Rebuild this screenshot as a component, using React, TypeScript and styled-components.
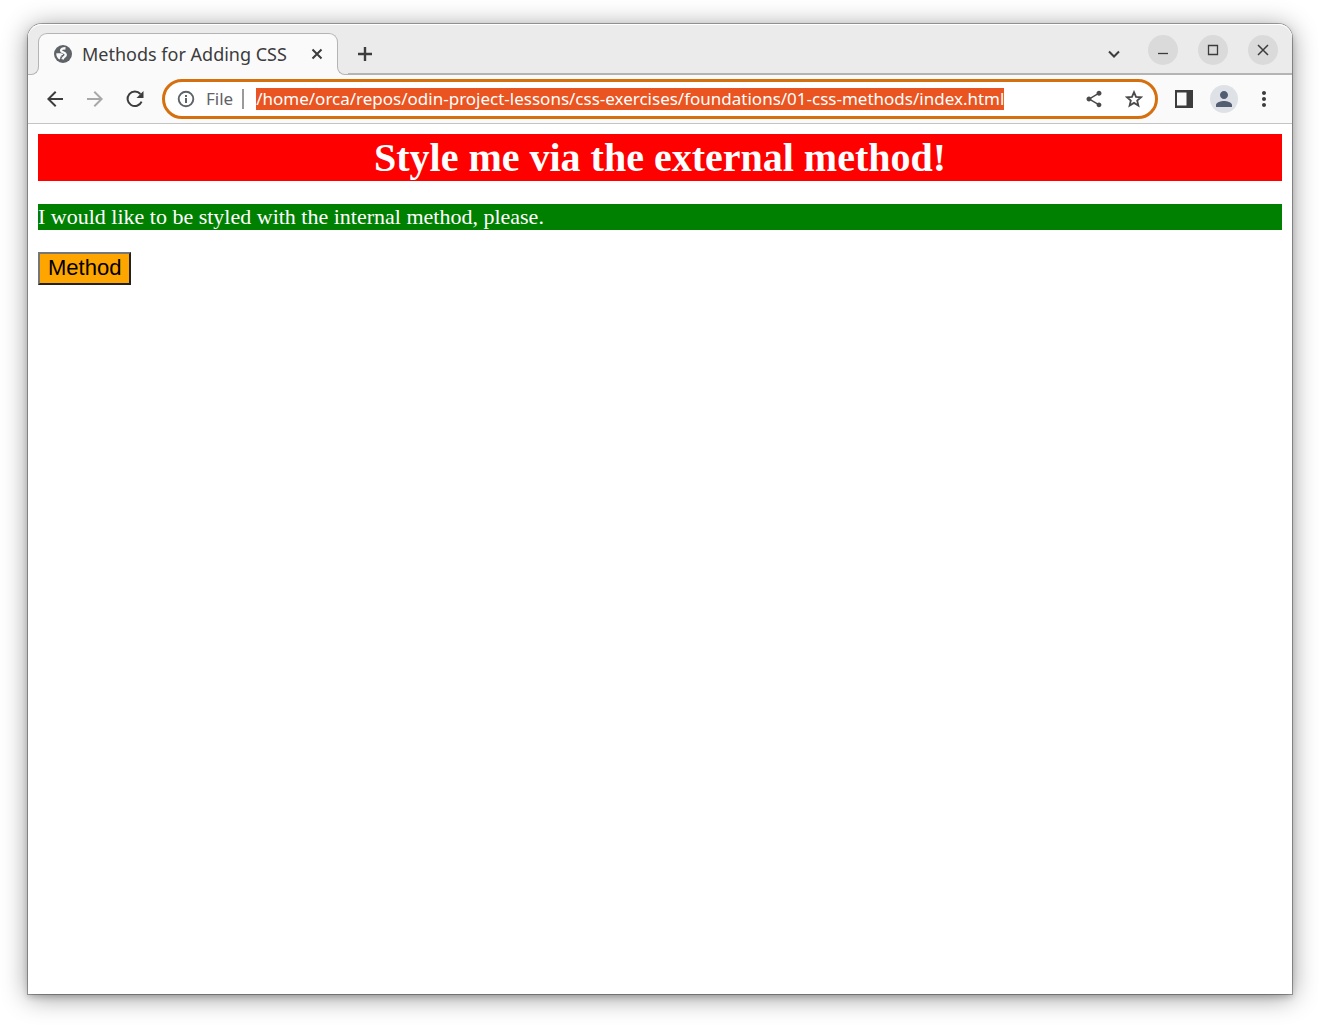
import React, { useEffect, useRef } from "react";
import styled, { createGlobalStyle } from "styled-components";
import {
  MdArrowBack,
  MdArrowForward,
  MdMoreVert,
  MdPerson,
  MdShare,
} from "react-icons/md";

const frame = {
  strip: "#ebebeb",
  bar: "#fafafa",
  line: "#b4b4b4",
  ink: "#3c3c3c",
  focus: "#d6700f",
  select: "#e95420",
};

const GlobalStyle = createGlobalStyle`
  *, *::before, *::after { box-sizing: border-box; }
  html { background: #fff; }
  body { margin: 0; }
`;

const Desktop = styled.div`
  display: flex;
  min-height: 100vh;
  padding: 24px 26px 31px 28px;
`;

const Window = styled.div`
  flex: 1;
  min-width: 0;
  display: flex;
  flex-direction: column;
  background: #fff;
  border-radius: 14px 14px 0 0;
  box-shadow: 0 0 0 1px rgba(0, 0, 0, 0.3), 0 3px 6px rgba(0, 0, 0, 0.2),
    0 3px 26px rgba(0, 0, 0, 0.42);
`;

const TabStrip = styled.header`
  display: flex;
  align-items: flex-end;
  height: 51px;
  padding: 0 14px 0 10px;
  background: ${frame.strip};
  border-bottom: 2px solid ${frame.line};
  border-radius: 14px 14px 0 0;
  box-shadow: inset 0 1px 0 #fff;
  color: ${frame.ink};
  font-family: "Noto Sans", sans-serif;
`;

const Tab = styled.div`
  position: relative;
  display: flex;
  align-items: center;
  width: 300px;
  height: 42px;
  margin-bottom: -2px;
  padding: 0 10px 2px 15px;
  background: ${frame.bar};
  border: 1px solid ${frame.line};
  border-bottom: 0;
  border-radius: 9px 9px 0 0;

  &::before,
  &::after {
    content: "";
    position: absolute;
    bottom: 0;
    width: 11px;
    height: 11px;
    background: ${frame.strip};
    border: 0 solid ${frame.line};
    border-bottom-width: 1px;
    box-shadow: 0 0 0 5px ${frame.bar};
    clip-path: inset(0);
  }
  &::before {
    right: 100%;
    border-right-width: 1px;
    border-bottom-right-radius: 8px;
  }
  &::after {
    left: 100%;
    border-left-width: 1px;
    border-bottom-left-radius: 8px;
  }
`;

const TabTitle = styled.span`
  flex: 1;
  margin-left: 10px;
  font-size: 18px;
  line-height: 24px;
  white-space: nowrap;
`;

const IconButton = styled.button<{ $size: number; $color?: string }>`
  display: flex;
  flex: none;
  align-items: center;
  justify-content: center;
  width: ${(p) => p.$size}px;
  height: ${(p) => p.$size}px;
  padding: 0;
  border: 0;
  background: none;
  color: ${(p) => p.$color ?? frame.ink};
`;

const NewTab = styled.div`
  margin: 0 auto 4px 12px;
`;

const TabMenu = styled.div`
  margin: 0 19px 4px 0;
`;

const WindowControls = styled.div`
  display: flex;
  align-self: center;
  gap: 20px;
  padding-top: 2px;
`;

const WindowButton = styled(IconButton)`
  border-radius: 50%;
  background: #dadada;
`;

const Toolbar = styled.nav`
  display: flex;
  align-items: center;
  gap: 10px;
  height: 49px;
  padding: 0 13px 0 12px;
  background: ${frame.bar};
  border-bottom: 1px solid #c4c4c4;
`;

const Address = styled.form`
  flex: 1;
  min-width: 0;
  display: flex;
  align-items: center;
  height: 40px;
  margin: 0 1px 0 2px;
  padding: 0 6px 0 11px;
  background: #fff;
  border: 3px solid ${frame.focus};
  border-radius: 20px;
  font-family: "Noto Sans", sans-serif;
`;

const Scheme = styled.label`
  margin-right: 12px;
  padding: 0 9px 0 10px;
  border-right: 2px solid #9a9a9a;
  color: #5f6368;
  font-size: 17px;
  line-height: 20px;
`;

const UrlInput = styled.input`
  flex: 1;
  min-width: 0;
  height: 22px;
  padding: 0;
  border: 0;
  outline: 0;
  background: none;
  color: ${frame.ink};
  font-family: "Noto Sans", sans-serif;
  font-size: 17px;
  line-height: 22px;

  &::selection {
    background: ${frame.select};
    color: #fff;
  }
`;

const AddressActions = styled.div`
  display: flex;
  gap: 10px;
`;

const Avatar = styled.span`
  display: flex;
  align-items: center;
  justify-content: center;
  width: 28px;
  height: 28px;
  border-radius: 50%;
  background: #dee1e6;
  color: #535d73;
`;

const Page = styled.main`
  flex: 1;
  padding: 10px;
  font-family: "Liberation Serif", serif;
`;

const Title = styled.h1`
  margin: 0;
  background: red;
  color: #fff;
  font-size: 40px;
  line-height: 47px;
  text-align: center;
`;

const Message = styled.p`
  margin: 23px 0 22px;
  background: green;
  color: #fff;
  font-size: 22px;
  line-height: 26px;
`;

const MethodButton = styled.button`
  display: block;
  padding: 0 8px 2px;
  border: 2px solid;
  border-color: #767676 #212121 #212121 #767676;
  background: orange;
  color: #000;
  font-family: "Liberation Sans", sans-serif;
  font-size: 22px;
  line-height: 27px;
`;

const GlobeIcon = () => (
  <svg width="18" height="18" viewBox="0 0 18 18" aria-hidden="true">
    <circle cx="9" cy="9" r="9" fill="#5f6368" />
    <path
      d="M2.300 8.200H7c1.200 0 2 .8 2.100 1.800h-1.600v1.400H6.400c0 1.400-.3 2.600-.9 3.100C3.500 13.400 2 11 2.300 8.200z"
      fill="#fafafa"
    />
    <path
      d="M11.500 3.200C8.800 3.200 7 4 7.100 5.700c.1 2.100 4.600 1.400 4.700 4 0 1.900-2.400 1.800-3.300 4.600"
      fill="none"
      stroke="#fafafa"
      strokeWidth="2.400"
    />
  </svg>
);

const InfoIcon = () => (
  <svg width="18" height="18" viewBox="0 0 18 18" aria-hidden="true">
    <circle cx="9" cy="9" r="7.300" fill="none" stroke="currentColor" strokeWidth="1.900" />
    <path d="M8 8h2v5H8zM8 5h2v2H8z" fill="currentColor" />
  </svg>
);

const StarIcon = () => (
  <svg width="18" height="18" viewBox="0 0 18 18" aria-hidden="true">
    <path
      d="M9 2.200l2 4.700 5.100.4-3.900 3.300 1.200 5L9 12.900l-4.400 2.700 1.200-5L1.900 7.300 7 6.900z"
      fill="none"
      stroke="currentColor"
      strokeWidth="1.800"
    />
  </svg>
);

const StrokeIcon = ({ size, d, width = 2 }: { size: number; d: string; width?: number }) => (
  <svg
    width={size}
    height={size}
    viewBox={`0 0 ${size} ${size}`}
    fill="none"
    stroke="currentColor"
    strokeWidth={width}
    aria-hidden="true"
  >
    <path d={d} />
  </svg>
);

const ReloadIcon = () => (
  <svg width="20" height="20" viewBox="0 0 20 20" fill="none" aria-hidden="true">
    <path d="M16.600 12.600A7.300 7.300 0 1 1 15.400 5" stroke="currentColor" strokeWidth="2" />
    <path d="M18.500 2v7h-7z" fill="currentColor" />
  </svg>
);

const SidePanelIcon = () => (
  <svg width="18" height="18" viewBox="0 0 18 18" aria-hidden="true">
    <path fillRule="evenodd" d="M0 0h18v18H0zM2 2.500v13h9.500v-13z" fill="currentColor" />
  </svg>
);

export default function App() {
  const url = useRef<HTMLInputElement>(null);

  useEffect(() => {
    url.current?.focus();
    url.current?.select();
  }, []);

  return (
    <>
      <GlobalStyle />
      <Desktop>
        <Window>
          <TabStrip>
            <Tab>
              <GlobeIcon />
              <TabTitle>Methods for Adding CSS</TabTitle>
              <IconButton $size={20} aria-label="Close tab">
                <StrokeIcon size={12} d="M1.500 1.500l9 9M10.500 1.500l-9 9" />
              </IconButton>
            </Tab>
            <NewTab>
              <IconButton $size={30} aria-label="New tab">
                <StrokeIcon size={16} width={2.4} d="M8 1v14M1 8h14" />
              </IconButton>
            </NewTab>
            <TabMenu>
              <IconButton $size={30} aria-label="Search tabs">
                <StrokeIcon size={12} d="M1 3.500l5 5 5-5" />
              </IconButton>
            </TabMenu>
            <WindowControls>
              <WindowButton $size={30} aria-label="Minimize">
                <StrokeIcon size={12} width={1.3} d="M1 9.500h10" />
              </WindowButton>
              <WindowButton $size={30} aria-label="Maximize">
                <StrokeIcon size={12} width={1.3} d="M1.500 1.500h9v9h-9z" />
              </WindowButton>
              <WindowButton $size={30} aria-label="Close window">
                <StrokeIcon size={12} width={1.5} d="M1 1l10 10M11 1L1 11" />
              </WindowButton>
            </WindowControls>
          </TabStrip>
          <Toolbar>
            <IconButton $size={30} aria-label="Back">
              <MdArrowBack size={24} />
            </IconButton>
            <IconButton $size={30} $color="#a8a8a8" aria-label="Forward">
              <MdArrowForward size={24} />
            </IconButton>
            <IconButton $size={30} aria-label="Reload">
              <ReloadIcon />
            </IconButton>
            <Address onSubmit={(e) => e.preventDefault()}>
              <IconButton $size={20} $color="#5f6368" type="button" aria-label="Site information">
                <InfoIcon />
              </IconButton>
              <Scheme htmlFor="url">File</Scheme>
              <UrlInput
                id="url"
                ref={url}
                spellCheck={false}
                defaultValue="/home/orca/repos/odin-project-lessons/css-exercises/foundations/01-css-methods/index.html"
              />
              <AddressActions>
                <IconButton $size={30} $color="#4a4a4a" type="button" aria-label="Share">
                  <MdShare size={20} />
                </IconButton>
                <IconButton $size={30} $color="#4a4a4a" type="button" aria-label="Bookmark">
                  <StarIcon />
                </IconButton>
              </AddressActions>
            </Address>
            <IconButton $size={30} aria-label="Side panel">
              <SidePanelIcon />
            </IconButton>
            <IconButton $size={30} aria-label="Profile">
              <Avatar>
                <MdPerson size={24} />
              </Avatar>
            </IconButton>
            <IconButton $size={30} aria-label="Menu">
              <MdMoreVert size={24} />
            </IconButton>
          </Toolbar>
          <Page>
            <Title>Style me via the external method!</Title>
            <Message>I would like to be styled with the internal method, please.</Message>
            <MethodButton>Method</MethodButton>
          </Page>
        </Window>
      </Desktop>
    </>
  );
}
